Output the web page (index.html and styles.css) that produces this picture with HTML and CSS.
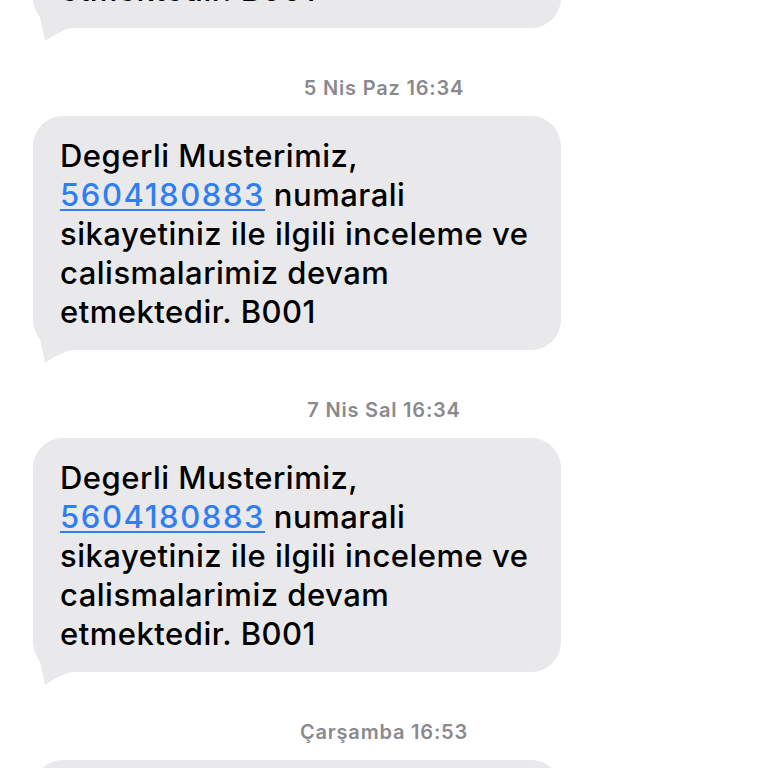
FILE: index.html
```html
<!DOCTYPE html>
<html lang="tr">
<head>
    <meta charset="UTF-8">
    <title>Mesajlar</title>
    <link rel="stylesheet" href="styles.css">
</head>
<body>
    <div class="thread">
        <!-- önceki mesaj -->
        <div class="bubble">
            <p>Degerli Musterimiz,<br><a href="#">5604180883</a> numarali<br>sikayetiniz ile ilgili inceleme ve<br>calismalarimiz devam<br>etmektedir. B001</p>
            <svg class="tail" viewBox="0 0 50 30"><path d="M6 0 C8 12 11 22 12 29 C20 23 30 18 42 15 L42 0 Z"/></svg>
        </div>

        <div class="stamp">5 Nis Paz 16:34</div>
        <div class="bubble">
            <p>Degerli Musterimiz,<br><a href="#">5604180883</a> numarali<br>sikayetiniz ile ilgili inceleme ve<br>calismalarimiz devam<br>etmektedir. B001</p>
            <svg class="tail" viewBox="0 0 50 30"><path d="M6 0 C8 12 11 22 12 29 C20 23 30 18 42 15 L42 0 Z"/></svg>
        </div>

        <div class="stamp">7 Nis Sal 16:34</div>
        <div class="bubble">
            <p>Degerli Musterimiz,<br><a href="#">5604180883</a> numarali<br>sikayetiniz ile ilgili inceleme ve<br>calismalarimiz devam<br>etmektedir. B001</p>
            <svg class="tail" viewBox="0 0 50 30"><path d="M6 0 C8 12 11 22 12 29 C20 23 30 18 42 15 L42 0 Z"/></svg>
        </div>

        <div class="stamp">Çarşamba 16:53</div>
        <div class="bubble">
            <p>Degerli Musterimiz,<br><a href="#">5604180883</a> numarali<br>sikayetiniz ile ilgili inceleme ve<br>calismalarimiz devam<br>etmektedir. B001</p>
        </div>
    </div>
</body>
</html>
```

FILE: styles.css
```css
body {
    margin: 0;
    background-color: #fff;
    font-family: Inter, "Noto Sans", sans-serif;
    overflow: hidden;
}

.thread {
    margin-top: -206px;
    padding: 0 207px 0 33px;
    display: flex;
    flex-direction: column;
}

.bubble {
    position: relative;
    background-color: #e9e9eb;
    border-radius: 30px;
    padding: 20px 20px 19px 27px;
}

.bubble p {
    margin: 0;
    font-size: 31px;
    font-weight: 500;
    letter-spacing: 0.5px;
    line-height: 39px;
    color: #000;
    white-space: nowrap;
}

.bubble a {
    color: #2f7ef2;
    letter-spacing: 1.6px;
    text-decoration: underline;
    text-decoration-thickness: 2px;
    text-underline-offset: 3px;
}

.tail {
    position: absolute;
    left: 0;
    bottom: -14px;
    width: 50px;
    height: 30px;
    fill: #e9e9eb;
}

.stamp {
    margin: 52px 0 20px;
    height: 16px;
    line-height: 16px;
    text-align: center;
    font-size: 20px;
    font-weight: 600;
    letter-spacing: 0.8px;
    color: #8a8a8e;
    padding-left: 174px;
}
```
